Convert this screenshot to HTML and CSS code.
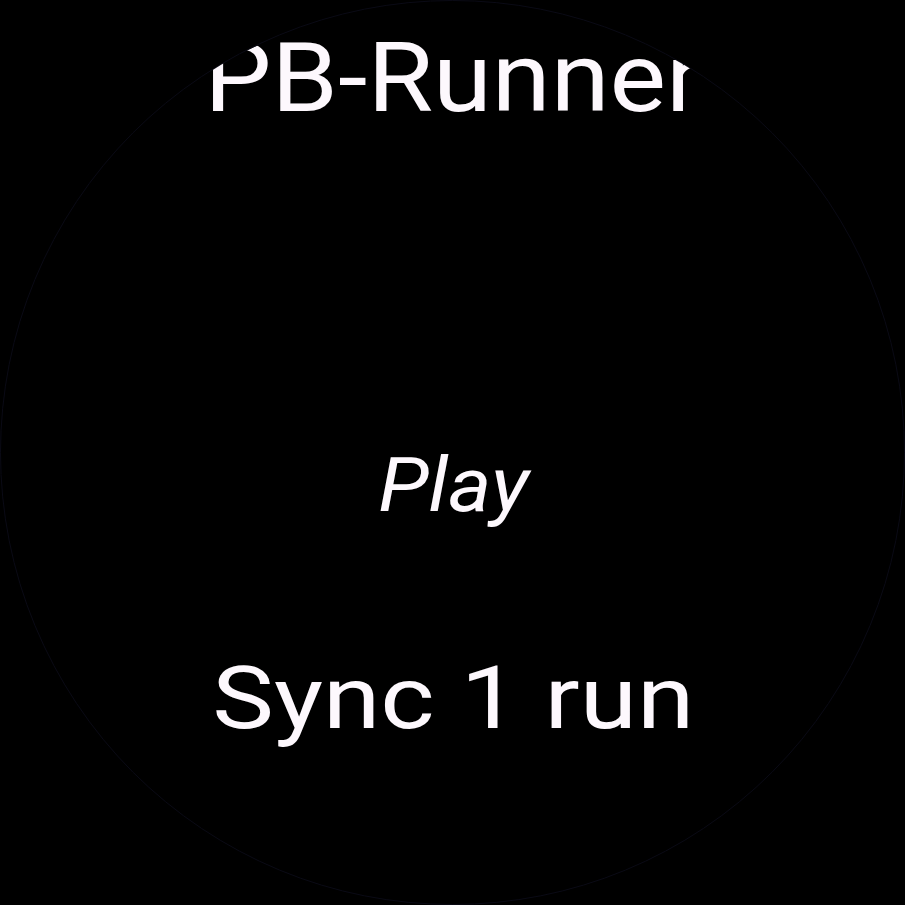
FILE: index.html
```html
<!DOCTYPE html>
<html>
<head>
<meta charset="utf-8">
<link rel="stylesheet" href="styles.css">
</head>
<body>
<div class="watch">
  <div class="screen">
    <div class="title">PB-Runner</div>
    <div class="play">Play</div>
    <div class="sync">Sync 1 run</div>
  </div>
</div>
</body>
</html>
```
FILE: styles.css
```css
html, body {
  margin: 0;
  padding: 0;
  background: #000;
}
.watch {
  width: 905px;
  height: 905px;
  border-radius: 50%;
  box-sizing: border-box;
  border: 1px solid #0a0a15;
  overflow: hidden;
}
.screen {
  width: 905px;
  height: 905px;
  display: flex;
  flex-direction: column;
  align-items: center;
  font-family: Roboto, "Liberation Sans", sans-serif;
  color: #fdf8fd;
  clip-path: circle(480px at 452px 483px);
}
.title {
  font-size: 96px;
  line-height: 1;
  margin-top: 29px;
  transform: scaleX(1.11);
}
.play {
  font-size: 75px;
  font-style: italic;
  line-height: 1;
  margin-top: 322px;
  transform: scaleX(1.1);
}
.sync {
  font-size: 88px;
  line-height: 1;
  margin-top: 131px;
  transform: scaleX(1.18);
}
```
